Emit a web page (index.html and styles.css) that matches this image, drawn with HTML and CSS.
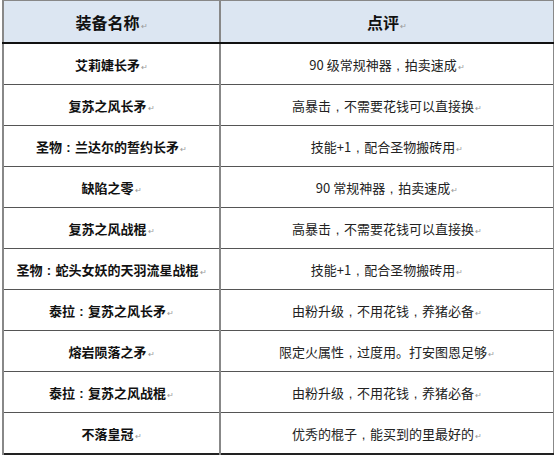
FILE: index.html
```html
<!DOCTYPE html>
<html lang="zh">
<head>
<meta charset="utf-8">
<link rel="stylesheet" href="styles.css">
</head>
<body>
<table class="gear">
  <colgroup><col class="c1"><col class="c2"></colgroup>
  <thead>
    <tr><th>装备名称<span class="ret">↵</span></th><th>点评<span class="ret">↵</span></th></tr>
  </thead>
  <tbody>
    <tr><td class="name">艾莉婕长矛<span class="ret">↵</span></td><td>90 级常规神器<span class="pu">,</span>拍卖速成<span class="ret">↵</span></td></tr>
    <tr><td class="name">复苏之风长矛<span class="ret">↵</span></td><td>高暴击<span class="pu">,</span>不需要花钱可以直接换<span class="ret">↵</span></td></tr>
    <tr><td class="name">圣物<span class="pu">:</span>兰达尔的誓约长矛<span class="ret">↵</span></td><td>技能+1<span class="pu">,</span>配合圣物搬砖用<span class="ret">↵</span></td></tr>
    <tr><td class="name">缺陷之零<span class="ret">↵</span></td><td>90 常规神器<span class="pu">,</span>拍卖速成<span class="ret">↵</span></td></tr>
    <tr><td class="name">复苏之风战棍<span class="ret">↵</span></td><td>高暴击<span class="pu">,</span>不需要花钱可以直接换<span class="ret">↵</span></td></tr>
    <tr><td class="name">圣物<span class="pu">:</span>蛇头女妖的天羽流星战棍<span class="ret">↵</span></td><td>技能+1<span class="pu">,</span>配合圣物搬砖用<span class="ret">↵</span></td></tr>
    <tr><td class="name">泰拉<span class="pu">:</span>复苏之风长矛<span class="ret">↵</span></td><td>由粉升级<span class="pu">,</span>不用花钱<span class="pu">,</span>养猪必备<span class="ret">↵</span></td></tr>
    <tr><td class="name">熔岩陨落之矛<span class="ret">↵</span></td><td>限定火属性<span class="pu">,</span>过度用。打安图恩足够<span class="ret">↵</span></td></tr>
    <tr><td class="name">泰拉<span class="pu">:</span>复苏之风战棍<span class="ret">↵</span></td><td>由粉升级<span class="pu">,</span>不用花钱<span class="pu">,</span>养猪必备<span class="ret">↵</span></td></tr>
    <tr><td class="name">不落皇冠<span class="ret">↵</span></td><td>优秀的棍子<span class="pu">,</span>能买到的里最好的<span class="ret">↵</span></td></tr>
  </tbody>
</table>
</body>
</html>
```

FILE: styles.css
```css
html, body {
  margin: 0;
  padding: 0;
  background: #ffffff;
}
body {
  font-family: "Microsoft YaHei", "Noto Sans CJK SC", "Noto Sans", sans-serif;
  color: #111;
}
.gear {
  margin-left: 2px;
  border-collapse: collapse;
  table-layout: fixed;
  width: 551px;
  border-left: 2px solid #666;
  border-right: 2px solid #888;
  border-top: 1px solid #888;
  border-bottom: 2px solid #222;
}
.c1 { width: 217px; }
.c2 { width: 334px; }
.gear th,
.gear td {
  padding: 0;
  text-align: center;
  vertical-align: middle;
  border-left: 2px solid #888;
  border-bottom: 1px solid #555;
  white-space: nowrap;
}
.gear th {
  height: 41px;
  background: #dce6f2;
  font-size: 16px;
  font-weight: bold;
  border-bottom: 2px solid #111;
}
.gear td {
  height: 40px;
  font-size: 13px;
  color: #222;
}
.gear td.name {
  font-weight: bold;
  color: #111;
}
.pu {
  display: inline-block;
  width: 1em;
  text-align: center;
  font-family: "Liberation Sans", sans-serif;
}
.ret {
  font-size: 8px;
  font-weight: normal;
  color: #999;
  margin-left: 1px;
}
```
